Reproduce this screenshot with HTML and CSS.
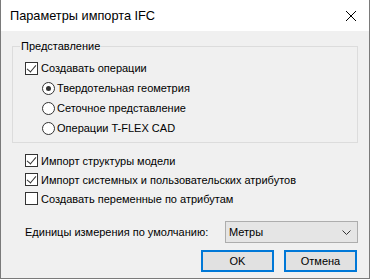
FILE: index.html
```html
<!DOCTYPE html>
<html lang="ru">
<head>
  <meta charset="UTF-8" />
  <title>Параметры импорта IFC</title>
  <link rel="stylesheet" href="styles.css">
</head>
<body>

  <div class="window">
    <div class="titlebar">
      <span class="title">Параметры импорта IFC</span>
      <svg class="close" width="12" height="12" viewBox="0 0 12 12">
        <path d="M1 1 L11 11 M11 1 L1 11" stroke="#000" stroke-width="1" fill="none"/>
      </svg>
    </div>

    <div class="content">
      <fieldset class="group">
        <legend>Представление</legend>
        <div class="row first">
          <span class="check on"></span>
          <span>Создавать операции</span>
        </div>
        <div class="row sub">
          <span class="radio on"></span>
          <span>Твердотельная геометрия</span>
        </div>
        <div class="row sub">
          <span class="radio"></span>
          <span>Сеточное представление</span>
        </div>
        <div class="row sub">
          <span class="radio"></span>
          <span>Операции T-FLEX CAD</span>
        </div>
      </fieldset>

      <div class="options">
        <div class="row tight">
          <span class="check on"></span>
          <span>Импорт структуры модели</span>
        </div>
        <div class="row tight">
          <span class="check on"></span>
          <span>Импорт системных и пользовательских атрибутов</span>
        </div>
        <div class="row tight">
          <span class="check"></span>
          <span>Создавать переменные по атрибутам</span>
        </div>
      </div>

      <div class="units">
        <span class="units-label">Единицы измерения по умолчанию:</span>
        <div class="select">
          <span>Метры</span>
          <svg width="9" height="5" viewBox="0 0 9 5">
            <path d="M0.5 0.5 L4.5 4.5 L8.5 0.5" stroke="#333" stroke-width="1" fill="none"/>
          </svg>
        </div>
      </div>

      <div class="buttons">
        <button class="btn">OK</button>
        <button class="btn">Отмена</button>
      </div>
    </div>
  </div>

</body>
</html>
```

FILE: styles.css
```css
html, body {
  margin: 0;
  padding: 0;
  background-color: #f0f0f0;
}

body {
  font-family: 'Segoe UI', 'Liberation Sans', sans-serif;
  font-size: 11px;
  color: #000;
}

.window {
  width: 370px;
  height: 279px;
  box-sizing: border-box;
  border: 1px solid #7a7a7a;
  border-top: none;
  background-color: #f0f0f0;
}

.titlebar {
  height: 31px;
  background-color: #fff;
  display: flex;
  align-items: center;
  justify-content: space-between;
  padding: 0 12px 0 9px;
}

.title {
  font-size: 12.75px;
  color: #000;
}

.close {
  display: block;
}

.content {
  padding: 0 11px;
}

.group {
  margin: 7px 0 0;
  padding: 0 0 4px 12px;
  border: 1px solid #dcdcdc;
  min-width: 0;
}

.group legend {
  margin-left: -5px;
  padding: 0 1px;
  line-height: 16px;
}

.row {
  display: flex;
  align-items: center;
  gap: 3px;
  height: 20px;
}

.row.first {
  margin-top: 4px;
}

.row.sub {
  margin-left: 17px;
  gap: 2px;
}

.row.tight {
  height: 19px;
}

.options {
  margin-top: 8px;
  padding-left: 13px;
}

.check {
  width: 13px;
  height: 13px;
  box-sizing: border-box;
  border: 1px solid #333;
  background-color: #fff;
  position: relative;
  flex: none;
}

.check.on::after {
  content: '';
  position: absolute;
  left: 3px;
  top: 0px;
  width: 4px;
  height: 8px;
  border: solid #333;
  border-width: 0 1px 1px 0;
  transform: rotate(40deg);
}

.radio {
  width: 13px;
  height: 13px;
  box-sizing: border-box;
  border: 1px solid #333;
  border-radius: 50%;
  background-color: #fff;
  position: relative;
  flex: none;
}

.radio.on::after {
  content: '';
  position: absolute;
  left: 3px;
  top: 3px;
  width: 5px;
  height: 5px;
  border-radius: 50%;
  background-color: #333;
}

.units {
  display: flex;
  align-items: center;
  margin-top: 13px;
  padding-left: 13px;
}

.units-label {
  flex: 1;
}

.select {
  width: 133px;
  height: 22px;
  box-sizing: border-box;
  border: 1px solid #adadad;
  background-color: #e5e5e5;
  display: flex;
  align-items: center;
  justify-content: space-between;
  padding: 0 6px 0 3px;
}

.buttons {
  display: flex;
  justify-content: flex-end;
  gap: 10px;
  margin-top: 7px;
  padding-right: 1px;
}

.btn {
  width: 73px;
  height: 22px;
  box-sizing: border-box;
  border: 2px solid #0078d7;
  background-color: #e1e1e1;
  font-family: inherit;
  font-size: 11px;
  color: #000;
  padding: 0;
}
```
